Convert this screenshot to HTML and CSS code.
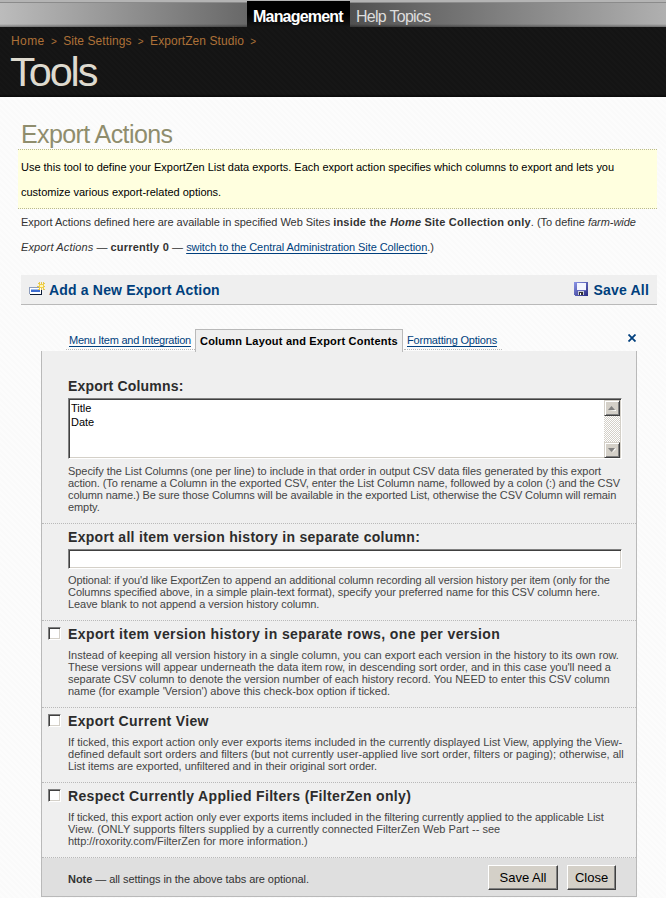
FILE: index.html
```html
<!DOCTYPE html>
<html lang="en">
<head>
<meta charset="utf-8">
<title>Tools</title>
<link rel="stylesheet" href="styles.css">
</head>
<body>
<nav class="topnav"><a class="topnav-item current">Management</a><a class="topnav-item">Help Topics</a></nav>
<header class="masthead">
  <div class="crumbs"><a>Home</a><i>&gt;</i><a>Site Settings</a><i>&gt;</i><a>ExportZen Studio</a><i>&gt;</i></div>
  <h1>Tools</h1>
</header>
<main>
  <h2>Export Actions</h2>
  <div class="notice">Use this tool to define your ExportZen List data exports. Each export action specifies which columns to export and lets you<br>customize various export-related options.</div>
  <div class="intro"><span class="intro-a">Export Actions defined here are available in specified Web Sites <b>inside the <em>Home</em> Site Collection only</b>. (To define <em>farm-wide</em></span><br><span class="intro-b"><em>Export Actions</em> — <b>currently 0</b> — <a class="link">switch to the Central Administration Site Collection</a>.)</span></div>
  <div class="actions">
    <a class="action"><svg class="ico-new" width="17" height="14" viewBox="0 0 17 14" shape-rendering="crispEdges"><path d="M1 6h12v7H1z" fill="#0c1c38"/><path d="M0 5h12v7H0z" fill="#8c9cbc"/><path d="M1 6h11v6H1z" fill="#fff"/><path d="M2 8h9v2H2z" fill="#3d6cd0"/><path d="M2 7h9v1H2z" fill="#9cbcf0"/><path d="M12 0h1v8h-1zM8 4h8v1H8zM9 1h1v1H9zM15 1h1v1h-1zM9 7h1v1H9zM15 7h1v1h-1zM14 0h1v2h-1zM10 0h1v2h-1zM10 6h1v2h-1zM14 6h1v2h-1z" fill="#e8c848"/><path d="M10 2h5v4h-5z" fill="#f0cf48"/><path d="M11 3h3v2h-3z" fill="#fff6b8"/></svg><span>Add a New Export Action</span></a>
    <a class="action save"><svg width="14" height="14" viewBox="0 0 14 14" shape-rendering="crispEdges"><defs><linearGradient id="disk" x2="1" y2="1"><stop stop-color="#8c96e8"/><stop offset="1" stop-color="#282a80"/></linearGradient></defs><path d="M0 0h14v14H1L0 13z" fill="url(#disk)"/><path d="M3 1h9v7H3z" fill="#f4f6ff"/><path d="M3 8h9v1H3z" fill="#6468c0"/><path d="M4 9h6v4H4z" fill="#c9ccd8"/><path d="M5 10h4v3H5z" fill="#333"/><path d="M6 11h1v2H6z" fill="#fff"/></svg><span>Save All</span></a>
  </div>
  <div class="editor">
    <div class="tabs">
      <a class="tab tab-menu"><span>Menu Item and Integration</span></a><a class="tab active"><span>Column Layout and Export Contents</span></a><a class="tab tab-format"><span>Formatting Options</span></a>
      <svg class="close" width="8" height="8" viewBox="0 0 8 8"><path d="M.5.5l7 7M7.500.5l-7 7" stroke="#003f7d" stroke-width="1.8"/></svg>
    </div>
    <div class="panel">
      <section class="s-columns">
        <h3>Export Columns:</h3>
        <div class="field area"><div class="lines">Title<br>Date</div>
          <div class="scroll"><span class="sbtn"><svg width="8" height="5" viewBox="0 0 8 5"><path d="M1 5h7V4z" fill="#fff"/><path d="M0 4L3.5 0 7 4z" fill="#808080"/></svg></span><span class="sbtn"><svg width="8" height="5" viewBox="0 0 8 5"><path d="M4 5l4-4-1-1z" fill="#fff"/><path d="M0 0h7L3.500 4z" fill="#808080"/></svg></span></div></div>
        <p class="tighter"><span class="tight">Specify the List Columns (one per line) to include in that order in output CSV data files generated by this export</span><br>action. (To rename a Column in the exported CSV, enter the List Column name, followed by a colon (:) and the CSV<br><span class="tightest">column name.) Be sure those Columns will be available in the exported List, otherwise the CSV Column will remain</span><br>empty.</p>
      </section>
      <section class="s-history">
        <h3>Export all item version history in separate column:</h3>
        <div class="field line"></div>
        <p class="tight"><span class="tighter">Optional: if you'd like ExportZen to append an additional column recording all version history per item (only for the</span><br>Columns specified above, in a simple plain-text format), specify your preferred name for this CSV column here.<br>Leave blank to not append a version history column.</p>
      </section>
      <section class="check">
        <span class="box"></span>
        <h3 class="wide">Export item version history in separate rows, one per version</h3>
        <p>Instead of keeping all version history in a single column, you can export each version in the history to its own row.<br><span class="snug">These versions will appear underneath the data item row, in descending sort order, and in this case you'll need a<br>separate CSV column to denote the version number of each history record. You NEED to enter this CSV column</span><br>name (for example 'Version') above this check-box option if ticked.</p>
      </section>
      <section class="check">
        <span class="box"></span>
        <h3>Export Current View</h3>
        <p>If ticked, this export action only ever exports items included in the currently displayed List View, applying the View-<br><span class="loose">defined default sort orders and filters (but not currently user-applied live sort order, filters or paging); otherwise, all</span><br><span class="snug">List items are exported, unfiltered and in their original sort order.</span></p>
      </section>
      <section class="check">
        <span class="box"></span>
        <h3>Respect Currently Applied Filters (FilterZen only)</h3>
        <p><span class="tight">If ticked, this export action only ever exports items included in the filtering currently applied to the applicable List</span><br><span class="loose">View. (ONLY supports filters supplied by a currently connected FilterZen Web Part -- see</span><br><span class="snug">http://roxority.com/FilterZen for more information.)</span></p>
      </section>
      <footer><span class="note"><b>Note</b> — all settings in the above tabs are optional.</span><span class="btn btn-save">Save All</span><span class="btn btn-close">Close</span></footer>
    </div>
  </div>
</main>
</body>
</html>
```

FILE: styles.css
```css
* { box-sizing: border-box; }
body {
  margin: 0;
  width: 666px;
  height: 898px;
  overflow: hidden;
  font: 11px/12px "Liberation Sans", Arial, sans-serif;
  color: #333;
  white-space: nowrap;
  background: #fbfbfb repeating-linear-gradient(45deg, #fafafa 0 2px, #fcfcfc 2px 4px);
}
h1, h2, h3, p { margin: 0; font-weight: normal; }

.snug { letter-spacing: -.03px; }
.tight { letter-spacing: -.06px; }
.tighter { letter-spacing: -.085px; }
.tightest { letter-spacing: -.1px; }
.loose { letter-spacing: .03px; }

.topnav {
  height: 27px;
  padding: 1px 0 0 247px;
  display: flex;
  background:
    linear-gradient(#b4b4b4 0 2px, #8b8b8b 2px 3px, transparent 3px 24px, rgba(0,0,0,.35) 27px),
    linear-gradient(90deg, #bcbcbc 0, #686868 247px, #505050 350px, #686868 420px, #b0b0b0 100%);
}
.topnav-item { font-size: 16px; line-height: 31px; letter-spacing: -.72px; color: #ddd; padding-left: 6px; }
.topnav-item.current { width: 103px; background: linear-gradient(#000 50%, #151515); color: #fff; font-weight: bold; letter-spacing: -.8px; }

.masthead {
  height: 70px;
  padding: 7px 0 0 11px;
  background: linear-gradient(transparent 67px, #080808), repeating-linear-gradient(45deg, #141414 0 2px, #161616 2px 4px);
}
.crumbs { display: flex; font-size: 12px; line-height: 14px; letter-spacing: .08px; color: #ad7138; }
.crumbs a:first-child { letter-spacing: .4px; }
.crumbs i { width: 18.500px; text-align: center; font-style: normal; font-size: 10px; line-height: 15px; }
h1 { font-size: 41.500px; line-height: 46px; letter-spacing: -2.1px; color: #dedacf; margin-left: -1px; }

main { padding: 24px 9px 0 18px; }
h2 { height: 28px; padding-left: 3px; font-size: 25px; line-height: 26px; letter-spacing: -.6px; color: #8f8d6d; }
.notice { height: 60px; padding: 5px 3px; border: dotted #b9b98f; border-width: 1px 0; background: #ffffdf; color: #000; line-height: 25px; letter-spacing: -.01px; }
.intro { height: 66px; padding: 1px 3px; line-height: 25px; }
.intro-a { letter-spacing: -.03px; }
.intro b { letter-spacing: .21px; }
.intro-b em { letter-spacing: .13px; }
.link { color: #003f7d; text-decoration: underline; text-underline-offset: 2px; letter-spacing: -.08px; }
.actions { height: 30px; margin-left: 3px; padding: 0 8px; background: #efefef; border-bottom: 1px solid #b9b9b9; display: flex; justify-content: space-between; }
.action { display: flex; font-size: 14px; font-weight: bold; line-height: 30px; color: #003f7d; letter-spacing: .18px; }
.action svg { margin: 7px 6px 0 0; }
.action .ico-new { margin: 7px 3px 0 0; }

.editor { margin: 24px 20px 0 23px; }
.tabs { display: flex; height: 22px; padding-left: 25px; position: relative; }
.tab { height: 21px; padding-left: 3px; line-height: 23px; color: #003f7d; border-bottom: 1px dotted #b9b9b9; letter-spacing: -.2px; }
.tab span { text-decoration: underline; text-underline-offset: 2px; }
.tab-menu { width: 129px; letter-spacing: -.26px; }
.tab.active { width: 208px; height: 23px; padding-left: 4px; border: 1px solid #b9b9b9; border-bottom: 0; background: #efefef; color: #000; font-weight: bold; z-index: 1; letter-spacing: .2px; }
.tab.active span { text-decoration: none; }
.tab-format { width: 98px; margin-left: 1px; }
.close { position: absolute; right: 1px; top: 5px; }

.panel { height: 546px; border: solid #b9b9b9; border-width: 0 1px 1px; background: #efefef; }
section { position: relative; padding: 4px 14px 0 26px; border-bottom: 1px dotted #b9b9b9; }
h3 { font-size: 14px; line-height: 18px; font-weight: bold; letter-spacing: .34px; color: #2c2c2c; }
h3.wide { letter-spacing: .4px; }
section p { color: #454545; margin-top: 6px; }
.s-columns { height: 173px; padding-top: 26px; }
.s-columns h3 { letter-spacing: .18px; }
.s-history { height: 97px; }
.s-history h3 { letter-spacing: .3px; }
.s-history p { margin-top: 5px; }
.check { height: 75px; }
.s-history + .check { height: 87px; }
.field { width: 554px; border: 1px solid; border-color: #808080 #fff #fff #808080; background: #fff; box-shadow: inset 1px 1px #404040, inset -1px -1px #d4d0c8; }
.area { height: 61px; margin-top: 3px; padding: 2px; display: flex; justify-content: space-between; color: #000; line-height: 14px; }
.line { height: 20px; margin-top: 3px; }
.scroll { width: 16px; margin: -1px -1px 0 0; height: 58px; display: flex; flex-direction: column; justify-content: space-between; background: repeating-conic-gradient(#d4d0c8 0 25%, #fff 0 50%) 0 0 / 2px 2px; }
.sbtn { height: 16px; display: grid; place-items: center; background: #d4d0c8; border: 1px solid; border-color: #d4d0c8 #404040 #404040 #d4d0c8; box-shadow: inset 1px 1px #fff, inset -1px -1px #808080; }
.box { position: absolute; left: 6px; top: 6px; width: 13px; height: 13px; border: 1px solid; border-color: #808080 #fff #fff #808080; background: #fff; box-shadow: inset 1px 1px #404040, inset -1px -1px #d4d0c8; }

footer { height: 38px; padding: 7px 20px 0 26px; display: flex; background: #dfdfdf; }
.note { flex: 1; line-height: 29px; letter-spacing: -.06px; }
.btn { height: 25px; border: 1px solid; border-color: #fff #404040 #404040 #fff; box-shadow: inset -1px -1px #808080; background: #d4d0c8; color: #000; font-size: 13px; line-height: 23px; text-align: center; }
.btn-save { width: 70px; margin-right: 9px; }
.btn-close { width: 49px; }
```
